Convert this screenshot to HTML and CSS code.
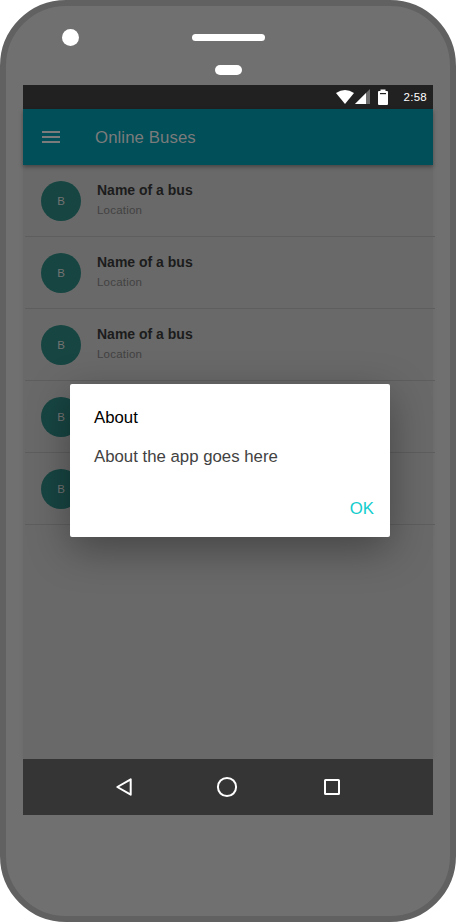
FILE: index.html
```
<!DOCTYPE html>
<html lang="en">
<head>
<meta charset="utf-8">
<title>Online Buses</title>
<link rel="stylesheet" href="styles.css">
</head>
<body>
<div class="phone">
  <div class="hardware">
    <div class="hardware-row"><span class="camera"></span><span class="speaker"></span></div>
    <span class="sensor"></span>
  </div>
  <div class="screen">
    <div class="status">
      <svg class="status-icons" width="54" height="24" viewBox="0 0 54 24" fill="#fff">
        <path d="M0 8Q9 2.200 18 8L9 19Z"/>
        <path d="M34 4V19H19Z" opacity=".35"/>
        <path d="M30 8V19H19Z"/>
        <path d="M44.500 4.500h5v1.500h1.500q1 0 1 1v12q0 1-1 1h-8q-1 0-1-1V7q0-1 1-1h1.500z"/>
        <path d="M44 8h6v1.200h-6z" fill="#222"/>
      </svg>
      <span class="clock">2:58</span>
    </div>
    <header class="appbar">
      <svg class="menu" width="18" height="12" viewBox="0 0 18 12" fill="#7b7b7b"><path d="M0 0h18v2H0zM0 5h18v2H0zM0 10h18v2H0z"/></svg>
      <h1 class="title">Online Buses</h1>
    </header>
    <main class="content">
      <div class="list">
        <div class="item"><span class="avatar">B</span><div><div class="name">Name of a bus</div><div class="place">Location</div></div></div>
        <div class="item"><span class="avatar">B</span><div><div class="name">Name of a bus</div><div class="place">Location</div></div></div>
        <div class="item"><span class="avatar">B</span><div><div class="name">Name of a bus</div><div class="place">Location</div></div></div>
        <div class="item"><span class="avatar">B</span></div>
        <div class="item"><span class="avatar">B</span></div>
      </div>
    </main>
    <nav class="navbar">
      <svg class="back" width="24" height="24" viewBox="0 0 24 24"><path d="M18.700 4.300V19.700L5.300 12Z"/></svg>
      <svg width="24" height="24" viewBox="0 0 24 24"><circle cx="12" cy="12" r="9.100"/></svg>
      <svg width="24" height="24" viewBox="0 0 24 24"><rect x="5" y="5" width="14" height="14" rx=".6"/></svg>
    </nav>
    <section class="dialog">
      <h2 class="dialog-title">About</h2>
      <p class="dialog-text">About the app goes here</p>
      <div class="actions"><span class="ok">OK</span></div>
    </section>
  </div>
</div>
</body>
</html>
```
FILE: styles.css
```
* { box-sizing: border-box; }
body { margin: 0; background: #fff; font-family: "Liberation Sans", Arial, sans-serif; }
h1, h2, p { margin: 0; font-weight: 400; }
svg { display: block; flex: none; }
.phone {
  width: 456px;
  height: 922px;
  border: 6px solid #616161;
  border-radius: 66px;
  background: #707070;
  padding: 0 17px;
}
.hardware { height: 79px; padding-top: 23px; }
.hardware-row { display: flex; align-items: center; height: 17px; padding-left: 39px; }
.camera { width: 17px; height: 17px; border-radius: 50%; background: #fff; }
.speaker { width: 73px; height: 7px; border-radius: 4px; background: #fff; margin-left: 113px; }
.sensor { display: block; width: 27px; height: 10px; border-radius: 5px; background: #fff; margin: 19px 0 0 192px; }
.screen { position: relative; width: 410px; height: 730px; display: flex; flex-direction: column; }
.status {
  height: 24px;
  flex: none;
  display: flex;
  align-items: center;
  justify-content: flex-end;
  padding-right: 6px;
  background: #212121;
  color: #fff;
}
.status-icons { margin-right: 1px; }
.clock { width: 36px; text-align: right; font-size: 11.500px; letter-spacing: .25px; line-height: 24px; }
.appbar {
  position: relative;
  height: 56px;
  flex: none;
  display: flex;
  align-items: center;
  padding-left: 19px;
  gap: 35px;
  background: #004f59;
  box-shadow: 0 2px 4px rgba(0, 0, 0, .35);
}
.title { font-size: 16.800px; letter-spacing: .08px; line-height: 24px; padding-top: 1px; color: #7b7b7b; }
.content { flex: 1; padding-left: 2px; background: #696969; box-shadow: 0 0 5px rgba(0, 0, 0, .06); }
.list { width: 410px; }
.item {
  display: flex;
  height: 72px;
  padding: 16px 16px 0;
  gap: 16px;
  border-bottom: 1px solid #5e5e5e;
}
.avatar {
  width: 40px;
  height: 40px;
  border-radius: 50%;
  background: #174542;
  color: #737373;
  font-size: 11.500px;
  line-height: 40px;
  text-align: center;
}
.name { font-size: 14px; line-height: 20px; font-weight: 700; color: #1c1c1c; margin-top: -1px; }
.place { font-size: 11.500px; letter-spacing: .2px; line-height: 20px; color: #424242; }
.navbar {
  position: relative;
  height: 56px;
  flex: none;
  display: flex;
  align-items: center;
  justify-content: center;
  gap: 81px;
  padding-right: 2px;
  background: #353535;
}
.navbar svg { fill: none; stroke: #fff; stroke-width: 2; stroke-linejoin: round; }
.navbar .back { margin: 0 -2px 0 2px; }
.dialog {
  position: absolute;
  left: 47px;
  top: 299px;
  width: 320px;
  height: 153px;
  padding: 22px 16px 0 24px;
  border-radius: 2px;
  background: #fff;
  box-shadow: 0 12px 40px rgba(0, 0, 0, .35);
}
.dialog-title { font-size: 16.800px; line-height: 24px; color: #000; }
.dialog-text { margin-top: 15px; font-size: 16.800px; line-height: 24px; color: #424242; }
.actions { display: flex; justify-content: flex-end; margin-top: 28px; }
.ok { font-size: 16.800px; line-height: 24px; color: #12cdcd; }
```
